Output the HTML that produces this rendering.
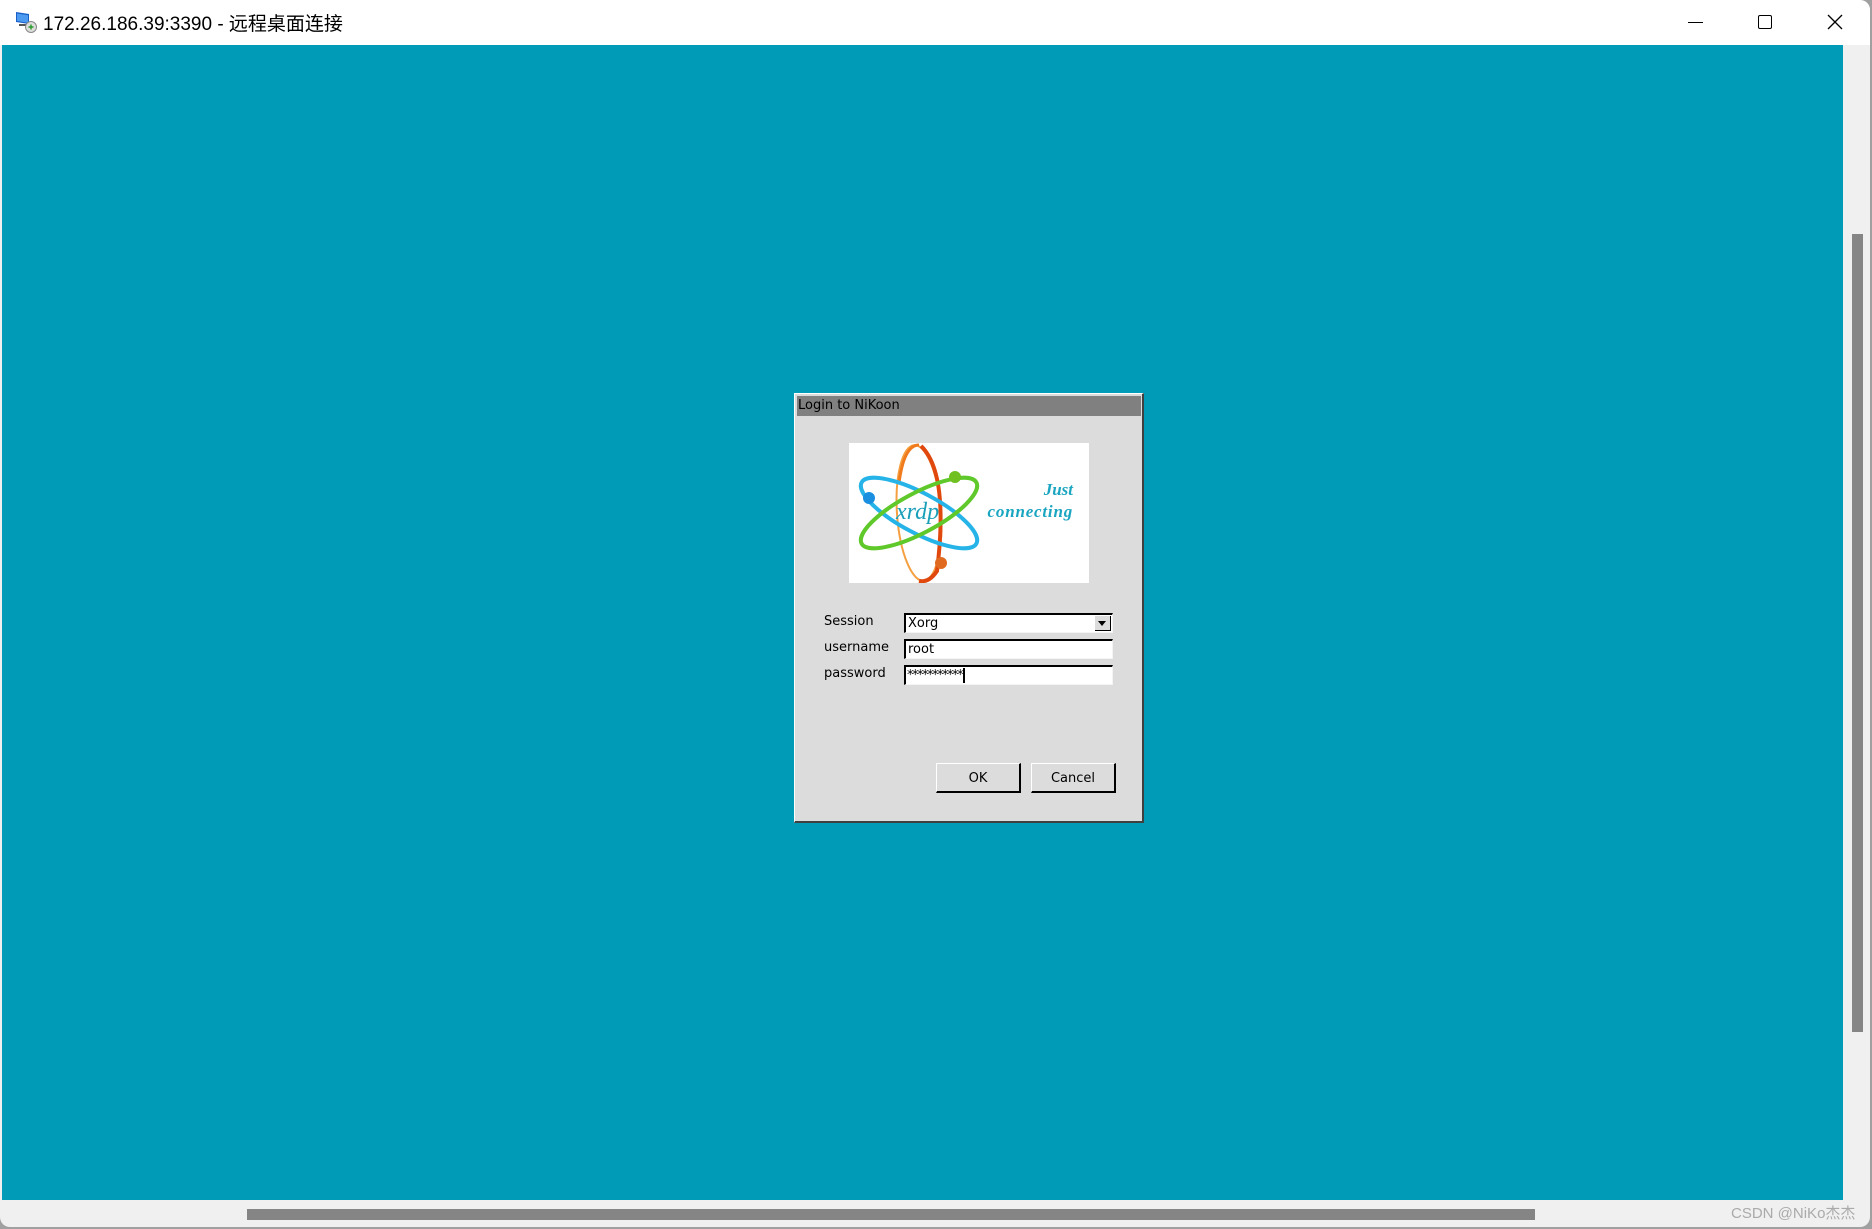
<!DOCTYPE html>
<html><head><meta charset="utf-8"><style>
html,body{margin:0;padding:0;width:1872px;height:1229px;overflow:hidden;background:#a0a0a0;font-family:"DejaVu Sans","Liberation Sans",sans-serif;}
.abs{position:absolute;}
#win{left:0;top:0;width:1870px;height:1227px;background:#f0f0f0;border-radius:0 10px 10px 10px;overflow:hidden;}
#title{left:0;top:0;width:1870px;height:45px;background:#fff;}
#title .t{left:43px;top:9px;font-family:"Liberation Sans","Noto Sans CJK SC",sans-serif;font-size:19px;color:#000;}
#teal{left:2px;top:45px;width:1841px;height:1155px;background:#009cb7;}
.field{background:#fff;border-top:2px solid #000;border-left:2px solid #000;border-right:1px solid #f4f4f4;border-bottom:1px solid #f4f4f4;box-sizing:border-box;font-size:13px;padding-left:2px;line-height:17px;}
.lbl{font-size:13px;color:#000;}
.btn{background:#dcdcdc;border-top:1px solid #fff;border-left:1px solid #fff;border-right:2px solid #000;border-bottom:2px solid #000;box-sizing:border-box;font-size:13px;text-align:center;line-height:29px;}
</style></head><body>
<div id="win" class="abs">
 <div id="title" class="abs">
  <svg class="abs" style="left:14px;top:9px" width="24" height="24" viewBox="0 0 24 24">
   <path d="M2 3 L15 5 L15 15 L2 13 Z" fill="#1a5fc8"/><path d="M3 4.5 L14 6.3 L14 13.8 L3 12 Z" fill="#4c9bf0"/>
   <rect x="5" y="15" width="8" height="2" fill="#555"/>
   <circle cx="17" cy="18" r="5.5" fill="#ddd" stroke="#888"/><path d="M14.5 18 L19.5 18 M17 15.5 L17 20.5" stroke="#2a9a2a" stroke-width="1.4"/>
  </svg>
  <div class="abs t">172.26.186.39:3390 - 远程桌面连接</div>
  <div class="abs" style="left:1688px;top:22px;width:15px;height:1px;background:#000"></div>
  <div class="abs" style="left:1758px;top:15px;width:12px;height:12px;border:1.3px solid #000;border-radius:2px"></div>
  <svg class="abs" style="left:1827px;top:14px" width="16" height="16"><path d="M1 1L15 15M15 1L1 15" stroke="#000" stroke-width="1.3"/></svg>
 </div>
 <div id="teal" class="abs"></div>
 <div class="abs" style="left:1852px;top:234px;width:11px;height:798px;background:#858585"></div>
 <div class="abs" style="left:247px;top:1209px;width:1288px;height:11px;background:#858585"></div>
 <div class="abs" style="left:1731px;top:1202px;font-family:'Liberation Sans','Noto Sans CJK SC',sans-serif;font-size:15px;color:#aaa">CSDN @NiKo杰杰</div>

 <div class="abs" style="left:794px;top:393px;width:350px;height:430px;background:#dcdcdc;border-top:1px solid #fff;border-left:1px solid #fff;border-right:2px solid #404040;border-bottom:2px solid #404040;box-sizing:border-box;">
  <div class="abs" style="left:2px;top:2px;width:344px;height:20px;background:#808080;font-size:13px;line-height:20px;padding-left:1px;box-sizing:border-box;color:#000">Login to NiKoon</div>
 </div>
 <div class="abs" style="left:849px;top:443px;width:240px;height:140px;background:#fff;overflow:hidden">
  <svg width="240" height="140" viewBox="0 0 240 140">
   <ellipse cx="70" cy="70" rx="22" ry="68" fill="none" stroke="#f5a040" stroke-width="2" transform="rotate(-4 70 70)"/>
   <path d="M72 3 Q100 30 88 128 Q80 140 70 138" fill="none" stroke="#e0480e" stroke-width="4"/>
   <path d="M70 2 Q55 2 50 40" fill="none" stroke="#f07a1c" stroke-width="3"/>
   <ellipse cx="70" cy="70" rx="65" ry="20" fill="none" stroke="#26b4e8" stroke-width="4" transform="rotate(28 70 70)"/>
   <ellipse cx="70" cy="70" rx="65" ry="20" fill="none" stroke="#5fc82a" stroke-width="4" transform="rotate(-28 70 70)"/>
   <circle cx="20" cy="55" r="6" fill="#1a8fe0"/>
   <circle cx="106" cy="34" r="6" fill="#6fc020"/>
   <circle cx="92" cy="120" r="6" fill="#e06a20"/>
   <text x="47" y="76" font-family="Liberation Serif,serif" font-style="italic" font-size="24" fill="#1a9fb8">xrdp</text>
   <text x="224" y="52" text-anchor="end" font-family="Liberation Serif,serif" font-style="italic" font-weight="bold" font-size="17" fill="#1aa5c0">Just</text>
   <text x="224" y="74" text-anchor="end" font-family="Liberation Serif,serif" font-style="italic" font-weight="bold" font-size="17" letter-spacing="0.8" fill="#1aa5c0">connecting</text>
  </svg>
 </div>
 <div class="abs lbl" style="left:824px;top:614px">Session</div>
 <div class="abs lbl" style="left:824px;top:640px">username</div>
 <div class="abs lbl" style="left:824px;top:666px">password</div>
 <div class="abs field" style="left:904px;top:613px;width:209px;height:20px">Xorg</div>
 <div class="abs" style="left:1095px;top:616px;width:16px;height:15px;background:#dcdcdc;border-right:1px solid #000;border-bottom:1px solid #000;box-sizing:border-box">
  <svg width="15" height="14" style="position:absolute;left:0;top:0"><path d="M3 5L11 5L7 10Z" fill="#000"/></svg>
 </div>
 <div class="abs field" style="left:904px;top:639px;width:209px;height:20px">root</div>
 <div class="abs field" style="left:904px;top:665px;width:209px;height:20px;font-size:13px;letter-spacing:-1.5px;padding-left:1px">***********<span style="display:inline-block;width:2px;height:15px;background:#000;vertical-align:middle;margin-left:1px"></span></div>
 <div class="abs btn" style="left:936px;top:763px;width:85px;height:30px">OK</div>
 <div class="abs btn" style="left:1031px;top:763px;width:85px;height:30px">Cancel</div>
</div>
</body></html>
